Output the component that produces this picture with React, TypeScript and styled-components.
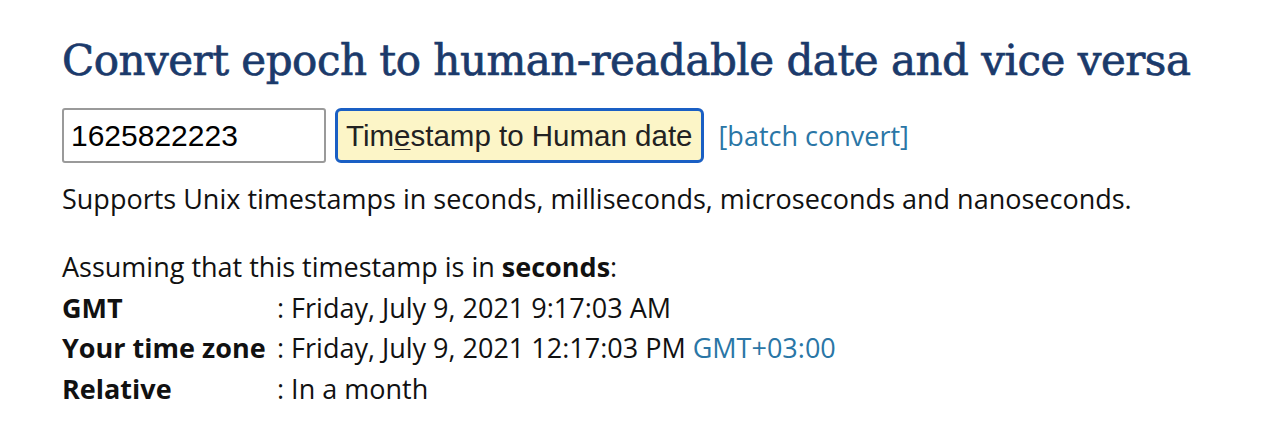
import React from "react";
import styled, { createGlobalStyle } from "styled-components";

const Global = createGlobalStyle`
  html, body { margin: 0; padding: 0; background: #fff; }
  body { font-family: "Open Sans", "Liberation Sans", sans-serif; color: #111; }
`;

const Page = styled.main`
  padding: 32px 62px 0;
`;

const Title = styled.h1`
  margin: 0;
  font-family: "DejaVu Serif", "Liberation Serif", serif;
  font-weight: 400;
  font-size: 42px;
  line-height: 58px;
  color: #1b3a6b;
  letter-spacing: -0.5px;
  white-space: nowrap;
  -webkit-text-stroke: 0.7px #1b3a6b;
`;

const FormRow = styled.div`
  display: flex;
  align-items: center;
  margin-top: 18px;
  gap: 9px;
`;

const NumberInput = styled.input`
  box-sizing: border-box;
  width: 264px;
  height: 55px;
  border: 2px solid #9a9a9a;
  border-radius: 3px;
  padding: 0 7px;
  font-family: "Liberation Sans", Arial, sans-serif;
  font-size: 30px;
  color: #000;
  background: #fff;
  outline: none;
`;

const ConvertButton = styled.button`
  box-sizing: border-box;
  height: 55px;
  padding: 0 8px;
  border: 3px solid #1a5fc4;
  border-radius: 6px;
  background: #fcf5c7;
  font-family: "Liberation Sans", Arial, sans-serif;
  font-size: 29.5px;
  color: #222;
  cursor: pointer;
  u { text-decoration-thickness: 1px; text-underline-offset: 3px; }
`;

const LinkText = styled.a`
  color: #2a76a6;
  text-decoration: none;
  font-size: 27px;
  margin-left: 6px;
`;

const Note = styled.p`
  margin: 16px 0 0;
  font-size: 27px;
  line-height: 40px;
`;

const Result = styled.div`
  margin-top: 28px;
  font-size: 27px;
  line-height: 40.5px;
`;

const Grid = styled.div`
  display: grid;
  grid-template-columns: 215px auto;
`;

const Label = styled.div`
  font-weight: 700;
`;

const Value = styled.div`
  white-space: nowrap;
`;

const Zone = styled.span`
  color: #2a76a6;
`;

export default function App() {
  return (
    <>
      <Global />
      <Page>
        <Title>Convert epoch to human-readable date and vice versa</Title>
        <FormRow>
          <NumberInput defaultValue="1625822223" />
          <ConvertButton>
            Tim<u>e</u>stamp to Human date
          </ConvertButton>
          <LinkText href="#">[batch convert]</LinkText>
        </FormRow>
        <Note>
          Supports Unix timestamps in seconds, milliseconds, microseconds and nanoseconds.
        </Note>
        <Result>
          <div>
            Assuming that this timestamp is in <b>seconds</b>:
          </div>
          <Grid>
            <Label>GMT</Label>
            <Value>: Friday, July 9, 2021 9:17:03 AM</Value>
            <Label>Your time zone</Label>
            <Value>
              : Friday, July 9, 2021 12:17:03 PM <Zone>GMT+03:00</Zone>
            </Value>
            <Label>Relative</Label>
            <Value>: In a month</Value>
          </Grid>
        </Result>
      </Page>
    </>
  );
}
